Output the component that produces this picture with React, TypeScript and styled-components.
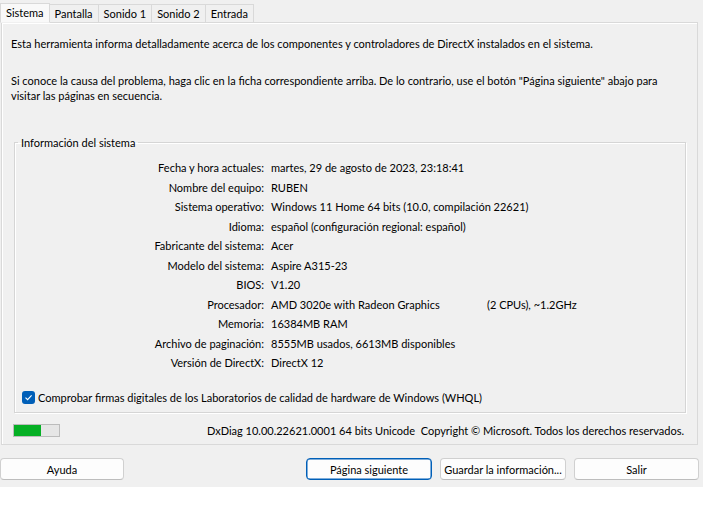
import React from "react";
import styled, { createGlobalStyle } from "styled-components";

const Global = createGlobalStyle`
  html, body { margin: 0; padding: 0; background: #ffffff; }
  body { font-family: "Lato", "Liberation Sans", sans-serif; font-size: 11px; color: #000; }
  * { box-sizing: border-box; }
`;

const Window = styled.div`
  width: 703px;
  height: 487px;
  background: #f0f0f0;
  display: flex;
  flex-direction: column;
`;

const TabStrip = styled.div`
  display: flex;
  align-items: flex-end;
  height: 22px;
  padding-left: 0;
  position: relative;
  z-index: 1;
`;

const Tab = styled.div<{ $active?: boolean }>`
  height: ${(p) => (p.$active ? 20 : 18)}px;
  padding: 0 5px;
  line-height: ${(p) => (p.$active ? 18 : 17)}px;
  border: 1px solid #d9d9d9;
  border-bottom: ${(p) => (p.$active ? "1px solid #f0f0f0" : "none")};
  margin-left: ${(p) => (p.$active ? 0 : -1)}px;
  margin-bottom: ${(p) => (p.$active ? -1 : 0)}px;
  background: ${(p) => (p.$active ? "#f9f9f9" : "#f0f0f0")};
  white-space: nowrap;
`;

const Panel = styled.div`
  margin: 0 5px 0 1px;
  height: 423px;
  border: 1px solid #d9d9d9;
  box-shadow: inset 1px 1px 0 #ffffff;
  background: #f0f0f0;
  padding: 13px 11px 0 9px;
  display: flex;
  flex-direction: column;
`;

const Para = styled.p<{ $gap?: number }>`
  margin: 0;
  margin-top: ${(p) => p.$gap ?? 0}px;
  line-height: 15px;
  white-space: pre;
`;

const Group = styled.fieldset`
  margin: 32px 0 0 3px;
  padding: 8px 0 7px 0;
  border: 1px solid #d5d5d5;
  box-shadow: inset 1px 1px 0 #ffffff, 1px 1px 0 #ffffff;
  min-width: 0;
`;

const Legend = styled.legend`
  margin-left: 3px;
  padding: 0 3px;
  line-height: 15px;
`;

const InfoGrid = styled.div`
  display: grid;
  grid-template-columns: 249px 1fr;
  column-gap: 7px;
  grid-auto-rows: 19.5px;
  align-items: center;
`;

const Label = styled.div`
  text-align: right;
  white-space: nowrap;
`;

const Value = styled.div`
  white-space: nowrap;
`;

const Cpu = styled.span`
  display: inline-block;
  width: 216px;
`;

const CheckRow = styled.label`
  display: flex;
  align-items: center;
  gap: 3px;
  margin: 17px 0 0 7px;
  line-height: 15px;
  white-space: nowrap;
`;

const CheckBox = styled.span`
  width: 13px;
  height: 13px;
  border-radius: 3px;
  background: #005fb8;
  display: inline-flex;
  align-items: center;
  justify-content: center;
`;

const Footer = styled.div`
  display: flex;
  align-items: center;
  justify-content: space-between;
  margin: 11px 2px 0 2px;
`;

const Progress = styled.div`
  width: 47px;
  height: 13px;
  border: 1px solid #bcbcbc;
  background: #e6e6e6;
  display: flex;
`;

const ProgressFill = styled.div`
  background: #06b025;
  height: 100%;
`;

const Copyright = styled.div`
  white-space: pre;
`;

const ButtonRow = styled.div`
  display: flex;
  align-items: center;
  gap: 8px;
  padding: 13px 4px 0 0;
`;

const Spacer = styled.div`
  flex: 1;
`;

const Button = styled.button<{ $focus?: boolean; $w?: number }>`
  width: ${(p) => p.$w ?? 126}px;
  height: 22px;
  font: inherit;
  color: #000;
  white-space: nowrap;
  background: #fdfdfd;
  border: 1px solid ${(p) => (p.$focus ? "#005fb8" : "#d0d0d0")};
  ${(p) => (p.$focus ? "box-shadow: inset 0 0 0 0.5px #005fb8;" : "border-bottom-color: #bdbdbd;")}
  border-radius: 4px;
  padding: 0;
`;

const rows: [string, React.ReactNode][] = [
  ["Fecha y hora actuales:", "martes, 29 de agosto de 2023, 23:18:41"],
  ["Nombre del equipo:", "RUBEN"],
  ["Sistema operativo:", "Windows 11 Home 64 bits (10.0, compilación 22621)"],
  ["Idioma:", "español (configuración regional: español)"],
  ["Fabricante del sistema:", "Acer"],
  ["Modelo del sistema:", "Aspire A315-23"],
  ["BIOS:", "V1.20"],
  [
    "Procesador:",
    <>
      <Cpu>AMD 3020e with Radeon Graphics</Cpu>(2 CPUs), ~1.2GHz
    </>,
  ],
  ["Memoria:", "16384MB RAM"],
  ["Archivo de paginación:", "8555MB usados, 6613MB disponibles"],
  ["Versión de DirectX:", "DirectX 12"],
];

export default function App() {
  return (
    <>
      <Global />
      <Window>
        <TabStrip>
          <Tab $active>Sistema</Tab>
          <Tab>Pantalla</Tab>
          <Tab>Sonido 1</Tab>
          <Tab>Sonido 2</Tab>
          <Tab>Entrada</Tab>
        </TabStrip>
        <Panel>
          <Para>
            Esta herramienta informa detalladamente acerca de los componentes y controladores de DirectX instalados en el sistema.
          </Para>
          <Para $gap={22}>
            {'Si conoce la causa del problema, haga clic en la ficha correspondiente arriba. De lo contrario, use el botón "Página siguiente" abajo para\nvisitar las páginas en secuencia.'}
          </Para>
          <Group>
            <Legend>Información del sistema</Legend>
            <InfoGrid>
              {rows.map(([l, v], i) => (
                <React.Fragment key={i}>
                  <Label>{l}</Label>
                  <Value>{v}</Value>
                </React.Fragment>
              ))}
            </InfoGrid>
            <CheckRow>
              <CheckBox>
                <svg width="9" height="9" viewBox="0 0 9 9">
                  <path d="M1.5 4.6 L3.6 6.7 L7.6 2.3" fill="none" stroke="#fff" strokeWidth="1.1" />
                </svg>
              </CheckBox>
              Comprobar firmas digitales de los Laboratorios de calidad de hardware de Windows (WHQL)
            </CheckRow>
          </Group>
          <Footer>
            <Progress>
              <ProgressFill style={{ width: "60%" }} />
            </Progress>
            <Copyright>DxDiag 10.00.22621.0001 64 bits Unicode  Copyright © Microsoft. Todos los derechos reservados.</Copyright>
          </Footer>
        </Panel>
        <ButtonRow>
          <Button $w={124}>Ayuda</Button>
          <Spacer />
          <Button $focus>Página siguiente</Button>
          <Button>Guardar la información...</Button>
          <Button $w={125}>Salir</Button>
        </ButtonRow>
      </Window>
    </>
  );
}
